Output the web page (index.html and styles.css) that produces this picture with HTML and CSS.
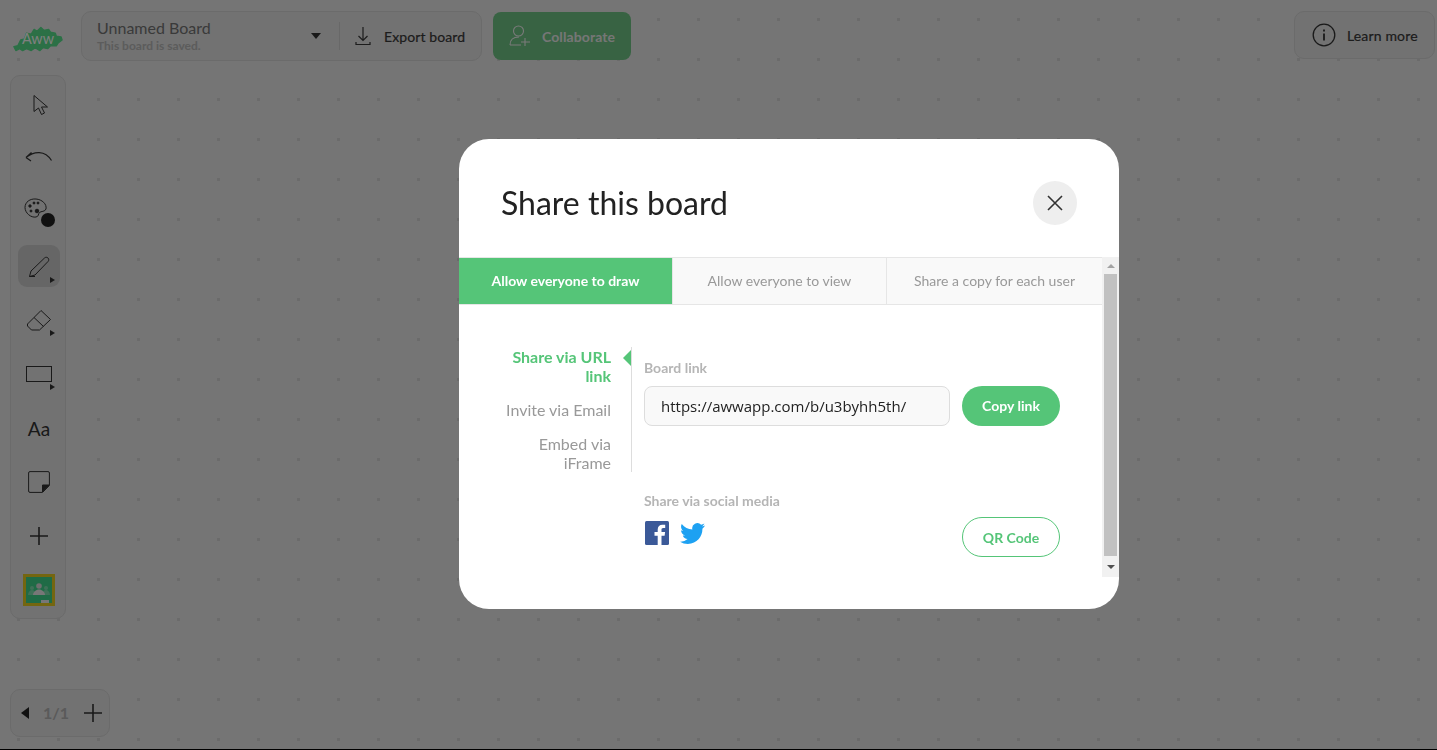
FILE: index.html
```html
<!DOCTYPE html>
<html lang="en">
<head>
    <meta charset="UTF-8">
    <meta name="viewport" content="width=device-width, initial-scale=1.0">
    <title>Share this board</title>
    <link rel="stylesheet" href="styles.css">
</head>
<body>
    <!-- Board behind the dialog -->
    <div class="board">
        <header class="topbar">
            <svg class="logo" viewBox="0 0 52 26" width="52" height="26">
                <path d="M1 21 L5 20 L8 14 L12 13 L14 7 L19 8 L22 3 L25 5 L29 1 L32 4 L37 3 L39 6 L44 7 L45 10 L50 11 L51 14 L47 17 L45 20 L39 20 L36 23 L31 22 L28 25 L23 22 L19 25 L14 23 L10 25 L7 23 L3 25 Z" fill="#58e08c" stroke="#58e08c" stroke-width="1.500" stroke-linejoin="round"/>
                <text x="26" y="18.500" text-anchor="middle" class="logo-text">Aww</text>
            </svg>
            <div class="board-pill">
                <div class="board-name">
                    <div class="board-title">Unnamed Board</div>
                    <div class="board-saved">This board is saved.</div>
                </div>
                <span class="caret"></span>
                <div class="export">
                    <svg width="16" height="19" viewBox="0 0 16 19" fill="none" stroke="#383838" stroke-width="1.2">
                        <path d="M8 0v13M3.500 9 8 13.500 12.500 9M1 15v2.500h14V15"/>
                    </svg>
                    <span>Export board</span>
                </div>
            </div>
            <div class="collab">
                <svg width="22" height="22" viewBox="0 0 22 22" fill="none" stroke="#f4f4f4" stroke-width="1.100">
                    <circle cx="9.500" cy="6" r="5"/>
                    <path d="M1 20c0-5 3-8 9-8M1 20h11M16 13v8M12 17h9"/>
                </svg>
                <span>Collaborate</span>
            </div>
            <div class="learn">
                <svg width="24" height="24" viewBox="0 0 24 24" fill="none" stroke="#333" stroke-width="1.300">
                    <circle cx="12" cy="12" r="10.800"/>
                    <path d="M12 10.500v7M12 6.500v2" stroke-width="1.800"/>
                </svg>
                <span>Learn more</span>
            </div>
        </header>

        <aside class="toolbar">
            <div class="tool">
                <svg class="cursor" width="18" height="22" viewBox="0 0 18 22" fill="none" stroke="#333" stroke-width="1">
                    <path d="M2 1.500v16l4.500-3.500 3 6.500 3-1.500-3-6h6z" stroke-linejoin="round"/>
                </svg>
            </div>
            <div class="tool">
                <svg class="undo" width="28" height="14" viewBox="0 0 28 14" fill="none" stroke="#333" stroke-width="1.200">
                    <path d="M1 7.500C9 1 20 0 26.500 10.500M1 7.500 6.500 2.500M1 7.500 6 11"/>
                </svg>
            </div>
            <div class="tool">
                <svg class="palette" width="24" height="22" viewBox="0 0 24 22" fill="none" stroke="#333" stroke-width="1">
                    <path d="M12 1C6 .5 1 4 1 9.500 1 15 7 20 12 19c3-.5 2-3 3.500-4.500S21 14 22 11C23 6 18 1.500 12 1z"/>
                    <circle cx="6" cy="8" r="1.200" fill="#333"/>
                    <circle cx="10" cy="5" r="1" fill="#333"/>
                    <circle cx="14" cy="5" r="1" fill="#333"/>
                    <circle cx="13" cy="13" r="1.800" fill="#333"/>
                    <circle cx="7" cy="13" r="1" fill="#333"/>
                </svg>
                <span class="color-dot"></span>
            </div>
            <div class="tool active">
                <svg width="22" height="22" viewBox="0 0 22 22" fill="none" stroke="#333" stroke-width="1">
                    <path d="M1.500 20.500 3 15 16.500 2c1-1 2.500-1 3.500 0s1 2.500 0 3.500L7 19z" stroke-linejoin="round"/>
                    <path d="M1.500 20.500H7"/>
                </svg>
                <span class="more"></span>
            </div>
            <div class="tool">
                <svg class="eraser" width="26" height="22" viewBox="0 0 26 22" fill="none" stroke="#333" stroke-width="1">
                    <path d="M1.500 15 15 1.500l9.500 9L13.500 21H5.500L1.500 17zM8 8.500l9.500 9"/>
                </svg>
                <span class="more"></span>
            </div>
            <div class="tool">
                <span class="rect-icon"></span>
                <span class="more"></span>
            </div>
            <div class="tool aa">Aa</div>
            <div class="tool">
                <svg width="22" height="22" viewBox="0 0 22 22" fill="none" stroke="#333" stroke-width="1">
                    <path d="M2 .6h18a1.400 1.400 0 0 1 1.400 1.400v12.500L14.500 21.400H2A1.400 1.400 0 0 1 .6 20V2A1.400 1.400 0 0 1 2 .6z"/>
                    <path d="M21 14h-6.500v7z" fill="#333"/>
                </svg>
            </div>
            <div class="tool">
                <svg width="18" height="18" viewBox="0 0 18 18" fill="none" stroke="#333" stroke-width="1.600">
                    <path d="M9 0v18M0 9h18"/>
                </svg>
            </div>
            <div class="tool">
                <svg width="32" height="32" viewBox="0 0 32 32">
                    <rect width="32" height="32" fill="#e8cc20"/>
                    <rect x="3" y="3" width="26" height="26" fill="#3ed68c"/>
                    <circle cx="16" cy="12" r="2.800" fill="#ddd"/>
                    <circle cx="9" cy="14" r="2" fill="#7fe2b0"/>
                    <circle cx="23" cy="14" r="2" fill="#7fe2b0"/>
                    <path d="M5 21c0-3 2-5 4-5s4 2 4 5zM19 21c0-3 2-5 4-5s4 2 4 5z" fill="#7fe2b0"/>
                    <path d="M10 21c0-3 3-5.500 6-5.500s6 2.500 6 5.500z" fill="#eee"/>
                    <rect x="18" y="26" width="8" height="3" fill="#eee"/>
                </svg>
            </div>
        </aside>

        <div class="pager">
            <span class="prev"></span>
            <span class="page-num">1/1</span>
            <svg width="18" height="18" viewBox="0 0 18 18" fill="none" stroke="#333" stroke-width="1.600">
                <path d="M9 0v18M0 9h18"/>
            </svg>
        </div>
    </div>

    <!-- Share dialog -->
    <div class="overlay">
        <div class="modal">
            <div class="modal-head">
                <h1>Share this board</h1>
                <div class="close">
                    <svg width="16" height="16" viewBox="0 0 16 16" fill="none" stroke="#333" stroke-width="1.600">
                        <path d="M1 1l14 14M15 1 1 15"/>
                    </svg>
                </div>
            </div>
            <div class="modal-scroll">
                <div class="modal-body">
                    <div class="tabs">
                        <div class="tab selected">Allow everyone to draw</div>
                        <div class="tab">Allow everyone to view</div>
                        <div class="tab">Share a copy for each user</div>
                    </div>
                    <div class="share">
                        <ul class="share-nav">
                            <li class="current">Share via URL link</li>
                            <li>Invite via Email</li>
                            <li>Embed via iFrame</li>
                        </ul>
                        <div class="share-main">
                            <div class="label">Board link</div>
                            <div class="link-row">
                                <div class="link-input">https://awwapp.com/b/u3byhh5th/</div>
                                <div class="pill-btn copy">Copy link</div>
                            </div>
                            <div class="social-row">
                                <div>
                                    <div class="label">Share via social media</div>
                                    <div class="social">
                                        <svg width="24" height="24" viewBox="0 0 24 24">
                                            <rect width="24" height="24" rx="1.500" fill="#3b5998"/>
                                            <path d="M16.500 24v-9.300h3.100l.5-3.600h-3.600V8.800c0-1 .3-1.800 1.800-1.800h1.900V3.800c-.3 0-1.500-.1-2.800-.1-2.800 0-4.700 1.700-4.700 4.800v2.600H9.500v3.600h3.200V24z" fill="#fff"/>
                                        </svg>
                                        <svg width="25" height="21" viewBox="0 0 24 20">
                                            <path d="M24 2.400c-.9.400-1.800.7-2.800.8 1-.6 1.800-1.600 2.200-2.700-1 .6-2 1-3.100 1.200A4.900 4.900 0 0 0 11.900 6.200C7.800 6 4.200 4 1.700.9.400 3.200 1 6 3.200 7.500c-.8 0-1.600-.2-2.200-.6 0 2.300 1.600 4.400 3.900 4.900-.7.200-1.500.2-2.200.1.600 2 2.400 3.400 4.600 3.400A9.900 9.900 0 0 1 0 17.800 14 14 0 0 0 7.500 20c9.100 0 14.300-7.700 14-14.600 1-.7 1.800-1.600 2.500-3z" fill="#1da1f2"/>
                                        </svg>
                                    </div>
                                </div>
                                <div class="pill-btn qr">QR Code</div>
                            </div>
                        </div>
                    </div>
                </div>
                <div class="scrollbar">
                    <span class="arrow up"></span>
                    <span class="thumb"></span>
                    <span class="arrow down"></span>
                </div>
            </div>
        </div>
    </div>
</body>
</html>
```
FILE: styles.css
```css
* {
    box-sizing: border-box;
}
html, body {
    margin: 0;
    height: 100%;
    overflow: hidden;
}
body {
    font-family: "Lato", sans-serif;
    background: #000;
}

/* Board */
.board {
    height: 749px;
    background-color: #ebebeb;
    background-image: radial-gradient(circle at 1.5px 1.5px, #d6d6d6 1.4px, transparent 1.6px);
    background-size: 40px 40px;
    background-position: 17px 18px;
    display: flex;
    flex-direction: column;
    padding: 11px 0 12px 10px;
}
.topbar {
    display: flex;
    align-items: flex-start;
}
.logo {
    margin: 15px 18px 0 3px;
    flex: none;
    width: 50px;
}
.logo-text {
    font-family: "Lato", sans-serif;
    font-size: 15px;
    fill: #fff;
}
.board-pill {
    width: 401px;
    height: 50px;
    background: #e4e4e4;
    border: 1px solid #d6d6d6;
    border-radius: 10px;
    display: flex;
    align-items: center;
    padding-left: 15px;
}
.board-name {
    width: 214px;
}
.board-title {
    font-size: 16px;
    line-height: 19px;
    margin-top: -1px;
    color: #747474;
}
.board-saved {
    font-size: 12px;
    line-height: 15px;
    font-weight: 700;
    margin-top: 1px;
    color: #b8b8b8;
}
.caret {
    width: 0;
    height: 0;
    border-left: 5px solid transparent;
    border-right: 5px solid transparent;
    border-top: 6px solid #333;
    margin-right: 18px;
}
.export {
    height: 28px;
    border-left: 1px solid #d0d0d0;
    padding-left: 15px;
    display: flex;
    align-items: center;
    gap: 13px;
    font-size: 14px;
    color: #383838;
    white-space: nowrap;
}
.export span {
    letter-spacing: .1px;
    -webkit-text-stroke: .2px #383838;
}
.collab {
    width: 138px;
    height: 48px;
    margin: 1px 0 0 11px;
    background: #70c686;
    border-radius: 8px;
    display: flex;
    align-items: center;
    gap: 11px;
    padding-left: 16px;
    font-size: 14px;
    font-weight: 700;
    letter-spacing: .1px;
    color: #ededed;
}
.learn {
    width: 141px;
    height: 48px;
    margin-left: auto;
    margin-right: 2px;
    background: #e4e4e4;
    border: 1px solid #d6d6d6;
    border-radius: 10px;
    display: flex;
    align-items: center;
    gap: 11px;
    padding-left: 17px;
    font-size: 14px;
    letter-spacing: .15px;
    color: #383838;
    -webkit-text-stroke: .2px #383838;
}

/* Left tools */
.toolbar {
    width: 56px;
    height: 544px;
    margin-top: 14px;
    background: #e4e4e4;
    border: 1px solid #d6d6d6;
    border-radius: 10px;
    padding: 2px 0 0 7px;
}
.tool {
    width: 42px;
    height: 53.900px;
    display: flex;
    align-items: center;
    justify-content: center;
    position: relative;
}
.tool.active::before {
    content: "";
    position: absolute;
    left: 0;
    right: 0;
    top: 5px;
    bottom: 7px;
    background: #cdcdcd;
    border-radius: 9px;
}
.tool svg {
    position: relative;
}
.cursor {
    margin-left: 3px;
}
.undo {
    margin-top: -4px;
}
.eraser {
    margin-top: -2px;
}
.palette {
    margin: -8px 6px 0 0;
}
.color-dot {
    position: absolute;
    left: 23px;
    top: 27px;
    width: 14px;
    height: 14px;
    border-radius: 50%;
    background: #222;
}
.more {
    position: absolute;
    right: 5px;
    bottom: 11px;
    width: 0;
    height: 0;
    border-left: 5px solid #333;
    border-top: 3px solid transparent;
    border-bottom: 3px solid transparent;
}
.rect-icon {
    width: 26px;
    height: 16px;
    border: 1.500px solid #333;
}
.aa {
    font-size: 19px;
    color: #333;
}

/* Pages */
.pager {
    width: 100px;
    height: 48px;
    margin-top: auto;
    background: #e4e4e4;
    border: 1px solid #d6d6d6;
    border-radius: 10px;
    display: flex;
    align-items: center;
    padding-left: 10px;
}
.prev {
    width: 0;
    height: 0;
    border-right: 8px solid #222;
    border-top: 6px solid transparent;
    border-bottom: 6px solid transparent;
    margin-right: 14px;
}
.page-num {
    font-size: 16px;
    font-weight: 700;
    color: #b4b4b4;
    width: 32px;
    margin: -2px 9px 0 0;
}

/* Dialog */
.overlay {
    position: fixed;
    left: 0;
    top: 0;
    width: 100%;
    height: 749px;
    background: rgba(0, 0, 0, .5);
    padding: 139px 0 0 459px;
}
.modal {
    width: 660px;
    height: 470px;
    background: #fff;
    border-radius: 30px;
    overflow: hidden;
}
.modal-head {
    height: 118px;
    display: flex;
    align-items: center;
    justify-content: space-between;
    padding: 10px 42px 0;
}
.modal-head h1 {
    margin: -2px 0 0;
    font-size: 32px;
    font-weight: 400;
    color: #222;
}
.close {
    width: 44px;
    height: 44px;
    border-radius: 50%;
    background: #eee;
    display: flex;
    align-items: center;
    justify-content: center;
}
.modal-scroll {
    display: flex;
    height: 320px;
}
.modal-body {
    width: 643px;
}
.tabs {
    display: flex;
    height: 48px;
    border-top: 1px solid #e6e6e6;
    border-bottom: 1px solid #e6e6e6;
    background: #f9f9f9;
}
.tab {
    flex: 0 0 214px;
    display: flex;
    align-items: center;
    justify-content: center;
    padding-bottom: 2px;
    font-size: 14px;
    color: #999;
    border-left: 1px solid #e6e6e6;
}
.tab:first-child {
    border-left: 0;
    flex-basis: 213px;
}
.tab:last-child {
    flex-basis: 216px;
}
.tab.selected {
    background: #55c578;
    color: #fff;
    font-weight: 700;
}
.share {
    display: flex;
    padding-top: 42px;
    align-items: flex-start;
}
.share-nav {
    list-style: none;
    margin: 0;
    padding: 0 20px 0 42px;
    width: 173px;
    height: 125px;
    border-right: 1px solid #ddd;
    text-align: right;
    font-size: 16px;
    line-height: 19px;
    color: #999;
}
.share-nav li {
    padding-top: 15px;
}
.share-nav li:first-child {
    padding-top: 0;
}
.share-nav .current {
    color: #55c578;
    font-weight: 700;
    position: relative;
}
.share-nav .current::after {
    content: "";
    position: absolute;
    right: -20px;
    top: 3px;
    border-right: 8px solid #55c578;
    border-top: 8px solid transparent;
    border-bottom: 8px solid transparent;
}
.share-main {
    width: 470px;
    padding: 13px 0 0 12px;
}
.label {
    font-size: 14px;
    line-height: 16px;
    font-weight: 700;
    color: #b5b5b5;
}
.link-row {
    display: flex;
    gap: 12px;
    margin-top: 10px;
}
.link-input {
    width: 306px;
    height: 40px;
    background: #f9f9f9;
    border: 1px solid #ddd;
    border-radius: 8px;
    padding-left: 16px;
    font-family: "Open Sans", sans-serif;
    font-size: 15px;
    line-height: 38px;
    color: #222;
}
.pill-btn {
    width: 98px;
    height: 40px;
    border-radius: 20px;
    display: flex;
    align-items: center;
    justify-content: center;
    font-size: 14px;
    font-weight: 700;
}
.copy {
    background: #55c578;
    color: #fff;
    padding-bottom: 2px;
}
.qr {
    border: 1px solid #55c578;
    color: #55c578;
    margin: 24px 42px 0 0;
}
.social-row {
    display: flex;
    justify-content: space-between;
    margin-top: 67px;
}
.social {
    display: flex;
    align-items: center;
    gap: 11px;
    margin: 12px 0 0 1px;
}
.scrollbar {
    width: 17px;
    background: #f1f1f1;
    display: flex;
    flex-direction: column;
    align-items: center;
}
.thumb {
    width: 13px;
    height: 282px;
    background: #c1c1c1;
}
.arrow {
    width: 0;
    height: 0;
    border-left: 4px solid transparent;
    border-right: 4px solid transparent;
}
.arrow.up {
    border-bottom: 4px solid #a3a3a3;
    margin: 7px 0 6px;
}
.arrow.down {
    border-top: 4px solid #505050;
    margin-top: 9px;
}
```
